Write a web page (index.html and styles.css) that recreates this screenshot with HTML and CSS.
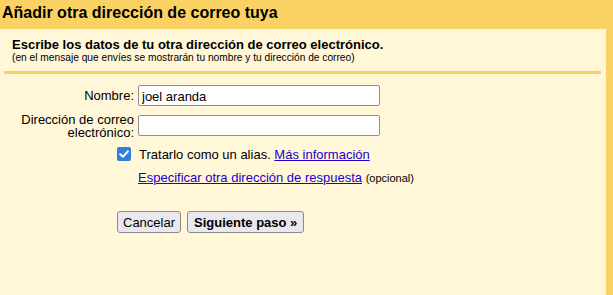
FILE: index.html
```html
<!DOCTYPE html>
<html lang="es">
<head>
<meta charset="utf-8">
<title>Añadir otra dirección</title>
<link rel="stylesheet" href="styles.css">
</head>
<body>
<div class="frame">
  <h1 class="title">Añadir otra dirección de correo tuya</h1>
  <div class="panel">
    <div class="intro">
      <div class="intro-main">Escribe los datos de tu otra dirección de correo electrónico.</div>
      <div class="intro-sub">(en el mensaje que envíes se mostrarán tu nombre y tu dirección de correo)</div>
    </div>
    <div class="form">
      <div class="row">
        <label class="label" for="n">Nombre:</label>
        <input class="field" id="n" type="text" value="joel aranda">
      </div>
      <div class="row row-top">
        <label class="label label-two" for="e">Dirección de correo electrónico:</label>
        <input class="field" id="e" type="text">
      </div>
      <div class="check-row">
        <span class="checkbox"><svg width="14" height="14" viewBox="0 0 14 14"><rect width="14" height="14" rx="2" fill="#2f7fd8"/><path d="M3.2 7.2 L5.9 9.8 L10.9 4.4" fill="none" stroke="#fff" stroke-width="2" stroke-linecap="round" stroke-linejoin="round"/></svg></span>
        <span class="check-text">Tratarlo como un alias. <a href="#">Más información</a></span>
      </div>
      <div class="reply-row"><a href="#">Especificar otra dirección de respuesta</a> <span class="opt">(opcional)</span></div>
      <div class="buttons">
        <button class="btn">Cancelar</button>
        <button class="btn btn-bold">Siguiente paso »</button>
      </div>
    </div>
  </div>
</div>
</body>
</html>
```
FILE: styles.css
```css
html, body {
  margin: 0;
  padding: 0;
  height: 100%;
}
body {
  font-family: "Liberation Sans", Arial, sans-serif;
  color: #000;
  background: #fad163;
}
.frame {
  height: 295px;
  background: #fad163;
  display: flex;
  flex-direction: column;
  padding-right: 7px;
  box-sizing: border-box;
}
.title {
  margin: 0;
  font-size: 16px;
  font-weight: bold;
  height: 29px;
  line-height: 26px;
  padding-left: 2px;
  box-sizing: border-box;
}
.panel {
  flex: 1;
  background: #fff7d7;
  padding: 0 5px 0 4px;
}
.intro {
  padding: 9px 0 7px 8px;
  border-bottom: 3px solid #fad163;
}
.intro-main {
  font-size: 13px;
  font-weight: bold;
  line-height: 14px;
}
.intro-sub {
  font-size: 10.2px;
  line-height: 12px;
}
.form {
  padding-top: 11px;
}
.row {
  display: flex;
  align-items: center;
  margin-bottom: 8px;
}
.row-top {
  align-items: flex-start;
  margin-bottom: 5px;
}
.row-top .field {
  margin-top: 1px;
}
.label {
  width: 130px;
  text-align: right;
  font-size: 13px;
  line-height: 14px;
  padding-right: 4px;
}
.label-two {
  line-height: 13px;
  margin-top: -1px;
}
.field {
  width: 242px;
  height: 21px;
  box-sizing: border-box;
  border: 1px solid #8f8f8f;
  border-radius: 2px;
  background: #fff;
  font-family: "Liberation Sans", Arial, sans-serif;
  font-size: 13px;
  padding: 1px 3px 0 3px;
  margin: 0;
}
.check-row {
  display: flex;
  align-items: center;
  padding-left: 113px;
  height: 20px;
}
.checkbox {
  width: 14px;
  height: 14px;
  display: block;
  margin-right: 8px;
}
.checkbox svg {
  display: block;
}
.check-text {
  font-size: 13px;
}
a {
  color: #2200cc;
  text-decoration: underline;
}
.reply-row {
  padding-left: 134px;
  font-size: 13px;
  margin-top: 4px;
  line-height: 20px;
}
.opt {
  font-size: 11px;
}
.buttons {
  display: flex;
  gap: 6px;
  padding-left: 113px;
  margin-top: 23px;
}
.btn {
  height: 22px;
  border: 1px solid #8a8a8a;
  border-radius: 3px;
  background: #e9e9ed;
  font-family: "Liberation Sans", Arial, sans-serif;
  font-size: 13px;
  padding: 0 5px;
  color: #000;
}
.btn-bold {
  font-weight: bold;
  padding: 0 6px;
}
```
